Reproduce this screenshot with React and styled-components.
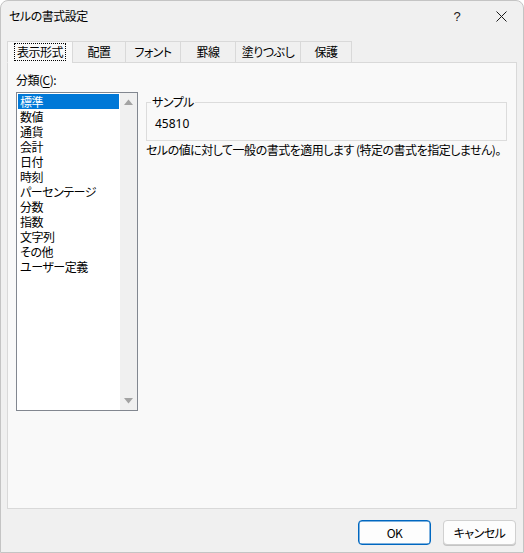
import React from "react";
import styled, { createGlobalStyle } from "styled-components";

const Global = createGlobalStyle`
  html, body { margin: 0; padding: 0; background: #ffffff; }
  body {
    font-family: "Noto Sans CJK JP", "Noto Sans", sans-serif;
    font-size: 12px;
    color: #000;
    font-feature-settings: "palt";
    letter-spacing: -0.5px;
  }
`;

const Window = styled.div`
  width: 524px;
  height: 553px;
  box-sizing: border-box;
  background: #f0f0f0;
  border: 1px solid #c4c4c4;
  border-radius: 8px 8px 0 0;
  display: flex;
  flex-direction: column;
  overflow: hidden;
`;

const TitleBar = styled.div`
  height: 30px;
  display: flex;
  align-items: center;
  padding-left: 8px;
  flex: none;
`;

const Title = styled.div`
  flex: 1;
  font-size: 12px;
  line-height: 16px;
`;

const TitleButton = styled.div`
  width: 44px;
  height: 30px;
  display: flex;
  align-items: center;
  justify-content: center;
  font-size: 13px;
  font-family: "Liberation Sans", sans-serif;
  color: #1a1a1a;
  letter-spacing: 0;
`;

const Body = styled.div`
  flex: 1;
  display: flex;
  flex-direction: column;
  padding: 10px 6px 0 6px;
`;

const TabStrip = styled.div`
  display: flex;
  height: 22px;
  flex: none;
  position: relative;
  z-index: 1;
`;

const Tab = styled.div`
  width: ${(p) => p.$w}px;
  box-sizing: border-box;
  height: 22px;
  display: flex;
  align-items: center;
  justify-content: center;
  background: ${(p) => (p.$active ? "#f9f9f9" : "#f0f0f0")};
  border: 1px solid #d9d9d9;
  border-bottom: ${(p) => (p.$active ? "1px solid #f9f9f9" : "1px solid #d9d9d9")};
  margin-left: -1px;
  &:first-child { margin-left: 0; }
`;

const TabLabel = styled.span`
  line-height: 16px;
  padding: 0 2px;
  border: 1px dotted ${(p) => (p.$focus ? "#000" : "transparent")};
`;

const Panel = styled.div`
  height: 447px;
  box-sizing: border-box;
  margin-top: -1px;
  background: #f9f9f9;
  border: 1px solid #d9d9d9;
  display: flex;
  padding: 9px 8px 0 8px;
  gap: 8px;
`;

const LeftCol = styled.div`
  display: flex;
  flex-direction: column;
  width: 122px;
  flex: none;
`;

const FieldLabel = styled.div`
  line-height: 16px;
  height: 20px;
  u { text-decoration: underline; text-underline-offset: 2px; }
`;

const ListBox = styled.div`
  height: 319px;
  box-sizing: border-box;
  border: 1px solid #828790;
  background: #fff;
  display: flex;
`;

const Items = styled.div`
  flex: 1;
  padding: 1px;
  display: flex;
  flex-direction: column;
`;

const Item = styled.div`
  height: 15px;
  line-height: 15px;
  padding-left: 2px;
  white-space: nowrap;
  overflow: hidden;
  background: ${(p) => (p.$selected ? "#0078d7" : "transparent")};
  color: ${(p) => (p.$selected ? "#fff" : "#000")};
`;

const ScrollBar = styled.div`
  width: 17px;
  flex: none;
  background: #f0f0f0;
  display: flex;
  flex-direction: column;
  justify-content: space-between;
  align-items: center;
  padding: 6px 0;
`;

const RightCol = styled.div`
  flex: 1;
  display: flex;
  flex-direction: column;
  padding-top: 22px;
  padding-right: 1px;
`;

const Group = styled.fieldset`
  margin: 0;
  padding: 6px 8px 0 8px;
  border: 1px solid #dcdcdc;
  height: 47px;
  box-sizing: border-box;
`;

const Legend = styled.legend`
  padding: 0 1px;
  margin-left: -4px;
  line-height: 16px;
`;

const SampleValue = styled.div`
  line-height: 16px;
  font-family: "Noto Sans", sans-serif;
  font-size: 12px;
  letter-spacing: 0;
  padding-left: 0;
`;

const Description = styled.div`
  margin-top: 1px;
  line-height: 16px;
  white-space: nowrap;
`;

const Footer = styled.div`
  display: flex;
  justify-content: flex-end;
  gap: 12px;
  padding: 11px 1px 0 0;
`;

const Button = styled.button`
  width: 73px;
  height: 25px;
  box-sizing: border-box;
  border-radius: 4px;
  background: #fdfdfd;
  border: 1px solid ${(p) => (p.$primary ? "#0067c0" : "#d0d0d0")};
  box-shadow: ${(p) => (p.$primary ? "inset 0 0 0 0.5px #0067c0" : "0 1px 0 #c4c4c4")};
  font-family: "Noto Sans CJK JP", "Noto Sans", sans-serif;
  font-feature-settings: "palt";
  letter-spacing: -0.5px;
  font-size: 12px;
  color: #000;
  padding: 0;
`;

const Arrow = ({ up }) => (
  <svg width="9" height="6" viewBox="0 0 9 6">
    <path d={up ? "M0 6 L4.5 0.5 L9 6 Z" : "M0 0 L4.5 5.5 L9 0 Z"} fill="#a3a3a3" />
  </svg>
);

const categories = [
  "標準", "数値", "通貨", "会計", "日付", "時刻", "パーセンテージ",
  "分数", "指数", "文字列", "その他", "ユーザー定義",
];

const tabs = [
  { label: "表示形式", w: 66 },
  { label: "配置", w: 54 },
  { label: "フォント", w: 56 },
  { label: "罫線", w: 56 },
  { label: "塗りつぶし", w: 66 },
  { label: "保護", w: 52 },
];

export default function App() {
  return (
    <>
      <Global />
      <Window>
        <TitleBar>
          <Title>セルの書式設定</Title>
          <TitleButton>?</TitleButton>
          <TitleButton>
            <svg width="11" height="11" viewBox="0 0 11 11">
              <path d="M0.5 0.5 L10.5 10.5 M10.5 0.5 L0.5 10.5" stroke="#1a1a1a" strokeWidth="1" />
            </svg>
          </TitleButton>
        </TitleBar>
        <Body>
          <TabStrip>
            {tabs.map((t, i) => (
              <Tab key={t.label} $w={t.w} $active={i === 0}>
                <TabLabel $focus={i === 0}>{t.label}</TabLabel>
              </Tab>
            ))}
          </TabStrip>
          <Panel>
            <LeftCol>
              <FieldLabel>分類(<u>C</u>):</FieldLabel>
              <ListBox>
                <Items>
                  {categories.map((c, i) => (
                    <Item key={c} $selected={i === 0}>{c}</Item>
                  ))}
                </Items>
                <ScrollBar>
                  <Arrow up />
                  <Arrow />
                </ScrollBar>
              </ListBox>
            </LeftCol>
            <RightCol>
              <Group>
                <Legend>サンプル</Legend>
                <SampleValue>45810</SampleValue>
              </Group>
              <Description>セルの値に対して一般の書式を適用します (特定の書式を指定しません)。</Description>
            </RightCol>
          </Panel>
          <Footer>
            <Button $primary>OK</Button>
            <Button>キャンセル</Button>
          </Footer>
        </Body>
      </Window>
    </>
  );
}
